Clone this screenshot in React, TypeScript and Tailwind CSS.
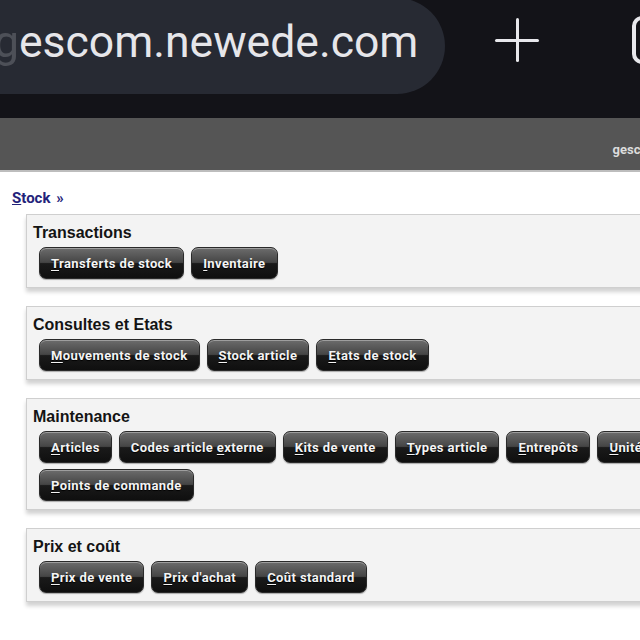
import React from 'react';

// [label, index of the underlined access key]
type Item = [string, number];

interface ISection {
    title: string;
    items: Array<Item>;
}

const sections: Array<ISection> = [
    {
        title: 'Transactions',
        items: [['Transferts de stock', 0], ['Inventaire', 0]],
    },
    {
        title: 'Consultes et Etats',
        items: [['Mouvements de stock', 0], ['Stock article', 0], ['Etats de stock', 0]],
    },
    {
        title: 'Maintenance',
        items: [
            ['Articles', 0],
            ['Codes article externe', 14],
            ['Kits de vente', 0],
            ['Types article', 0],
            ['Entrepôts', 0],
            ['Unités de mesure', 0],
            ['Points de commande', 0],
        ],
    },
    {
        title: 'Prix et coût',
        items: [['Prix de vente', 0], ['Prix d\'achat', 0], ['Coût standard', 0]],
    },
];

const GlossButton = ({ label, keyIdx }: { label: string; keyIdx: number }) => {
    return (
        <button className="h-8 px-[11px] rounded-[7px] border border-[#2a2a2a] bg-[linear-gradient(to_bottom,#6c6c6c_0%,#454545_48%,#1a1a1a_52%,#0f0f0f_100%)] shadow-[inset_0_1px_0_rgba(255,255,255,0.35),0_1px_1px_rgba(0,0,0,0.3)] text-[#f4f4f4] text-[13px] font-bold leading-none tracking-[0.4px] font-['Roboto',sans-serif] [text-shadow:0_1px_1px_#000] whitespace-nowrap">
            {label.slice(0, keyIdx)}
            <span className="underline underline-offset-2">{label.charAt(keyIdx)}</span>
            {label.slice(keyIdx + 1)}
        </button>
    );
};

const Section = ({ title, items }: ISection) => {
    return (
        <div className="w-[720px] border border-[#cfcfcf] bg-[#f3f3f3] pl-[12px] pr-2 pt-[9px] pb-[8px] shadow-[0_4px_4px_rgba(0,0,0,0.18)]">
            <h3 className="text-[16px] font-bold text-[#141414] leading-[18px] font-['Liberation_Sans',Arial,sans-serif] -ml-[6px]">{title}</h3>
            <div className="flex flex-wrap gap-x-[7px] gap-y-[6px] mt-[5px]">
                {items.map(([label, k], idx) => (
                    <GlossButton key={idx} label={label} keyIdx={k} />
                ))}
            </div>
        </div>
    );
};

export default function App() {
    return (
        <div className="w-[640px] h-[640px] overflow-hidden bg-white relative">
            {/* browser chrome */}
            <div className="h-[118px] bg-[#131318] flex items-start">
                <div className="w-[445px] h-[96px] shrink-0 bg-[#272a33] rounded-r-[48px] flex items-center -mt-[2px] overflow-hidden">
                    <span className="text-[44.5px] text-[#e6e6ea] font-['Roboto',sans-serif] whitespace-nowrap -ml-[6px] -mt-[8px]">
                        <span className="opacity-20">g</span>escom.newede.com
                    </span>
                </div>
                <div className="ml-[50px] mt-[18px] w-[44px] h-[44px] relative shrink-0">
                    <div className="absolute left-[20.5px] top-0 w-[3px] h-[44px] bg-[#e8e8ec] rounded" />
                    <div className="absolute top-[20.5px] left-0 h-[3px] w-[44px] bg-[#e8e8ec] rounded" />
                </div>
                <div className="ml-[93px] mt-[16px] w-[36px] h-[48px] border-[4px] border-[#e8e8ec] rounded-[10px] shrink-0" />
            </div>
            {/* site header */}
            <div className="h-[54px] bg-[#555555] border-b-2 border-[#bdbdbd] flex items-end justify-end pb-[11px] overflow-hidden">
                <span className="text-[13px] font-bold text-[#dcdcdc] font-['Roboto',sans-serif] -mr-[19px] whitespace-nowrap">gescom</span>
            </div>
            {/* content */}
            <div className="pl-[12px] pt-[13px]">
                <a href="#" className="text-[15px] font-bold text-[#23237a] font-['Roboto',sans-serif] leading-[18px]">
                    <span className="underline">S</span>tock <span className="ml-[2px]">»</span>
                </a>
                <div className="ml-[14px] mt-[5px] flex flex-col gap-[18px]">
                    {sections.map((s, i) => (
                        <Section key={i} title={s.title} items={s.items} />
                    ))}
                </div>
            </div>
        </div>
    );
}
